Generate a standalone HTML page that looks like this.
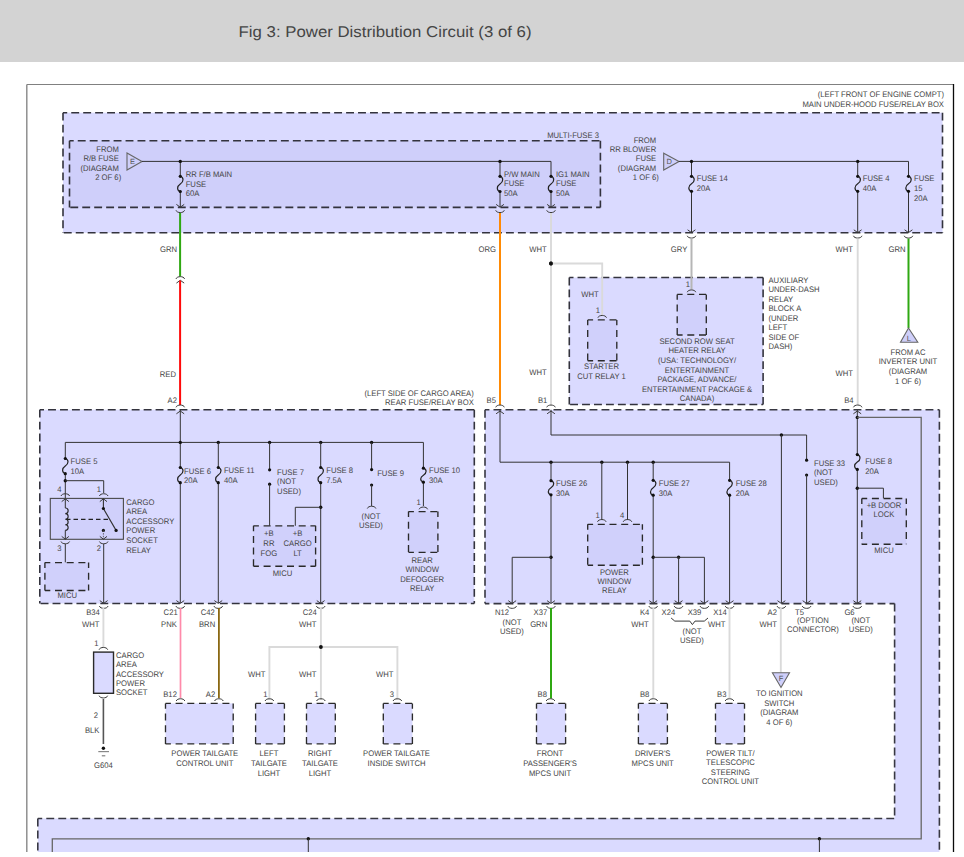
<!DOCTYPE html><html><head><meta charset="utf-8"><style>html,body{margin:0;padding:0;background:#fff;overflow:hidden}svg{display:block}text{font-family:"Liberation Sans",sans-serif;text-rendering:geometricPrecision}</style></head><body><svg width="964" height="857" viewBox="0 0 964 857" font-family="Liberation Sans, sans-serif">
<rect x="0" y="0" width="964" height="857" fill="#fff"/>
<rect x="0" y="0" width="964" height="62" fill="#d3d3d3"/>
<text x="238.6" y="36.9" font-size="15.6" fill="#454545" textLength="292.9" lengthAdjust="spacingAndGlyphs">Fig 3: Power Distribution Circuit (3 of 6)</text>
<path d="M26.8,84.5 V852" stroke="#888" stroke-width="1.4" fill="none"/>
<path d="M26.8,84.5 H953.5" stroke="#808080" stroke-width="1.2" fill="none"/>
<path d="M953.5,84 V852" stroke="#0a0a0a" stroke-width="1.3" fill="none"/>
<rect x="63" y="112.7" width="879.5" height="120.10000000000001" fill="#dadaff"/>
<path d="M63,112.7 H942.5" stroke="#33333d" stroke-width="1.6" stroke-dasharray="7.9 4.05" fill="none" stroke-dashoffset="3.7"/>
<path d="M63,232.8 H942.5" stroke="#33333d" stroke-width="1.6" stroke-dasharray="7.9 4.05" fill="none" stroke-dashoffset="-0.8"/>
<path d="M63,112.7 V232.8 M942.5,112.7 V232.8" stroke="#33333d" stroke-width="1.6" stroke-dasharray="7.9 4.05" fill="none" stroke-dashoffset="0"/>
<text transform="scale(0.947 1)" x="996.83" y="97" text-anchor="end" font-size="8.1" fill="#454545">(LEFT FRONT OF ENGINE COMPT)</text>
<text transform="scale(0.947 1)" x="996.83" y="106.5" text-anchor="end" font-size="8.1" fill="#454545">MAIN UNDER-HOOD FUSE/RELAY BOX</text>
<rect x="69.5" y="140.7" width="530.9" height="66.70000000000002" fill="#cfcffa"/>
<path d="M69.5,140.7 H600.4" stroke="#33333d" stroke-width="1.6" stroke-dasharray="7.9 4.05" fill="none" stroke-dashoffset="3.7"/>
<path d="M69.5,207.4 H600.4" stroke="#33333d" stroke-width="1.6" stroke-dasharray="7.9 4.05" fill="none" stroke-dashoffset="-0.8"/>
<path d="M69.5,140.7 V207.4 M600.4,140.7 V207.4" stroke="#33333d" stroke-width="1.6" stroke-dasharray="7.9 4.05" fill="none" stroke-dashoffset="0"/>
<text transform="scale(0.947 1)" x="632.52" y="137.7" text-anchor="end" font-size="8.1" fill="#454545">MULTI-FUSE 3</text>
<text transform="scale(0.947 1)" x="125.45" y="152" text-anchor="end" font-size="8.1" fill="#454545">FROM</text>
<text transform="scale(0.947 1)" x="125.45" y="161.2" text-anchor="end" font-size="8.1" fill="#454545">R/B FUSE</text>
<text transform="scale(0.947 1)" x="125.45" y="170.7" text-anchor="end" font-size="8.1" fill="#454545">(DIAGRAM</text>
<text transform="scale(0.947 1)" x="127.98" y="180" text-anchor="end" font-size="8.1" fill="#454545">2 OF 6)</text>
<path d="M127,153 L127,170 L142,161.4 Z" stroke="#666" stroke-width="1.1" fill="#cfcffa" />
<text x="132.6" y="164.4" text-anchor="middle" font-size="7.5" fill="#555">E</text>
<path d="M142,161.4 L551,161.4 L551,207" stroke="#333" stroke-width="1.0" fill="none" />
<path d="M180.3,161.4 L180.3,207" stroke="#333" stroke-width="1.0" fill="none" />
<path d="M500,161.4 L500,207" stroke="#333" stroke-width="1.0" fill="none" />
<circle cx="180.3" cy="161.4" r="1.7" fill="#111"/>
<circle cx="500" cy="161.4" r="1.7" fill="#111"/>
<rect x="179.10000000000002" y="176.3" width="2.4" height="15.199999999999989" fill="#cfcffa"/>
<path d="M180.3,176.3 C183.9,177.44 183.9,181.62 180.3,183.9 C176.70000000000002,186.18 176.70000000000002,190.36 180.3,191.5" stroke="#222" stroke-width="1.2" fill="none" />
<circle cx="180.3" cy="176.3" r="1.6" fill="#111"/>
<circle cx="180.3" cy="191.5" r="1.6" fill="#111"/>
<path d="M176.4,204.39999999999998 L180.3,207.2 L184.20000000000002,204.39999999999998" stroke="#3a3a3a" stroke-width="1.0" fill="none" />
<path d="M176.0,210.3 C176.9,213.3 183.70000000000002,213.3 184.60000000000002,210.3" stroke="#3a3a3a" stroke-width="1.0" fill="none" />
<rect x="498.8" y="176.3" width="2.4" height="15.199999999999989" fill="#cfcffa"/>
<path d="M500,176.3 C503.6,177.44 503.6,181.62 500,183.9 C496.4,186.18 496.4,190.36 500,191.5" stroke="#222" stroke-width="1.2" fill="none" />
<circle cx="500" cy="176.3" r="1.6" fill="#111"/>
<circle cx="500" cy="191.5" r="1.6" fill="#111"/>
<path d="M496.1,204.39999999999998 L500,207.2 L503.9,204.39999999999998" stroke="#3a3a3a" stroke-width="1.0" fill="none" />
<path d="M495.7,210.3 C496.59999999999997,213.3 503.40000000000003,213.3 504.3,210.3" stroke="#3a3a3a" stroke-width="1.0" fill="none" />
<rect x="549.8" y="176.3" width="2.4" height="15.199999999999989" fill="#cfcffa"/>
<path d="M551,176.3 C554.6,177.44 554.6,181.62 551,183.9 C547.4,186.18 547.4,190.36 551,191.5" stroke="#222" stroke-width="1.2" fill="none" />
<circle cx="551" cy="176.3" r="1.6" fill="#111"/>
<circle cx="551" cy="191.5" r="1.6" fill="#111"/>
<path d="M547.1,204.39999999999998 L551,207.2 L554.9,204.39999999999998" stroke="#3a3a3a" stroke-width="1.0" fill="none" />
<path d="M546.7,210.3 C547.6,213.3 554.4,213.3 555.3,210.3" stroke="#3a3a3a" stroke-width="1.0" fill="none" />
<text transform="scale(0.947 1)" x="196.09" y="177" font-size="8.1" fill="#454545">RR F/B MAIN</text>
<text transform="scale(0.947 1)" x="196.09" y="186.5" font-size="8.1" fill="#454545">FUSE</text>
<text transform="scale(0.947 1)" x="196.09" y="196" font-size="8.1" fill="#454545">60A</text>
<text transform="scale(0.947 1)" x="532.21" y="177" font-size="8.1" fill="#454545">P/W MAIN</text>
<text transform="scale(0.947 1)" x="532.21" y="186.3" font-size="8.1" fill="#454545">FUSE</text>
<text transform="scale(0.947 1)" x="532.21" y="195.8" font-size="8.1" fill="#454545">50A</text>
<text transform="scale(0.947 1)" x="587.12" y="177" font-size="8.1" fill="#454545">IG1 MAIN</text>
<text transform="scale(0.947 1)" x="587.12" y="186.3" font-size="8.1" fill="#454545">FUSE</text>
<text transform="scale(0.947 1)" x="587.12" y="195.8" font-size="8.1" fill="#454545">50A</text>
<text transform="scale(0.947 1)" x="692.93" y="143.1" text-anchor="end" font-size="8.1" fill="#454545">FROM</text>
<text transform="scale(0.947 1)" x="692.93" y="151.8" text-anchor="end" font-size="8.1" fill="#454545">RR BLOWER</text>
<text transform="scale(0.947 1)" x="692.93" y="161.1" text-anchor="end" font-size="8.1" fill="#454545">FUSE</text>
<text transform="scale(0.947 1)" x="692.93" y="170.6" text-anchor="end" font-size="8.1" fill="#454545">(DIAGRAM</text>
<text transform="scale(0.947 1)" x="695.67" y="180" text-anchor="end" font-size="8.1" fill="#454545">1 OF 6)</text>
<path d="M663.7,153.2 L663.7,170 L679,161.4 Z" stroke="#666" stroke-width="1.1" fill="#cfcffa" />
<text x="669.2" y="164.4" text-anchor="middle" font-size="7.5" fill="#555">D</text>
<path d="M678.8,161.4 L908.5,161.4 L908.5,232.6" stroke="#333" stroke-width="1.0" fill="none" />
<path d="M691.5,161.4 L691.5,232.6" stroke="#333" stroke-width="1.0" fill="none" />
<path d="M857.7,161.4 L857.7,232.6" stroke="#333" stroke-width="1.0" fill="none" />
<circle cx="691.5" cy="161.4" r="1.7" fill="#111"/>
<circle cx="857.7" cy="161.4" r="1.7" fill="#111"/>
<rect x="690.3" y="176.3" width="2.4" height="15.0" fill="#dadaff"/>
<path d="M691.5,176.3 C695.1,177.425 695.1,181.55 691.5,183.8 C687.9,186.05 687.9,190.175 691.5,191.3" stroke="#222" stroke-width="1.2" fill="none" />
<circle cx="691.5" cy="176.3" r="1.6" fill="#111"/>
<circle cx="691.5" cy="191.3" r="1.6" fill="#111"/>
<path d="M687.6,229.79999999999998 L691.5,232.6 L695.4,229.79999999999998" stroke="#3a3a3a" stroke-width="1.0" fill="none" />
<path d="M687.2,235.8 C688.1,238.8 694.9,238.8 695.8,235.8" stroke="#3a3a3a" stroke-width="1.0" fill="none" />
<rect x="856.5" y="176.3" width="2.4" height="15.0" fill="#dadaff"/>
<path d="M857.7,176.3 C861.3000000000001,177.425 861.3000000000001,181.55 857.7,183.8 C854.1,186.05 854.1,190.175 857.7,191.3" stroke="#222" stroke-width="1.2" fill="none" />
<circle cx="857.7" cy="176.3" r="1.6" fill="#111"/>
<circle cx="857.7" cy="191.3" r="1.6" fill="#111"/>
<path d="M853.8000000000001,229.79999999999998 L857.7,232.6 L861.6,229.79999999999998" stroke="#3a3a3a" stroke-width="1.0" fill="none" />
<path d="M853.4000000000001,235.8 C854.3000000000001,238.8 861.1,238.8 862.0,235.8" stroke="#3a3a3a" stroke-width="1.0" fill="none" />
<rect x="907.3" y="176.3" width="2.4" height="15.0" fill="#dadaff"/>
<path d="M908.5,176.3 C912.1,177.425 912.1,181.55 908.5,183.8 C904.9,186.05 904.9,190.175 908.5,191.3" stroke="#222" stroke-width="1.2" fill="none" />
<circle cx="908.5" cy="176.3" r="1.6" fill="#111"/>
<circle cx="908.5" cy="191.3" r="1.6" fill="#111"/>
<path d="M904.6,229.79999999999998 L908.5,232.6 L912.4,229.79999999999998" stroke="#3a3a3a" stroke-width="1.0" fill="none" />
<path d="M904.2,235.8 C905.1,238.8 911.9,238.8 912.8,235.8" stroke="#3a3a3a" stroke-width="1.0" fill="none" />
<text transform="scale(0.947 1)" x="735.69" y="180.7" font-size="8.1" fill="#454545">FUSE 14</text>
<text transform="scale(0.947 1)" x="735.69" y="190.9" font-size="8.1" fill="#454545">20A</text>
<text transform="scale(0.947 1)" x="911.09" y="180.8" font-size="8.1" fill="#454545">FUSE 4</text>
<text transform="scale(0.947 1)" x="911.09" y="190.7" font-size="8.1" fill="#454545">40A</text>
<text transform="scale(0.947 1)" x="965.15" y="180.8" font-size="8.1" fill="#454545">FUSE</text>
<text transform="scale(0.947 1)" x="965.15" y="190.7" font-size="8.1" fill="#454545">15</text>
<text transform="scale(0.947 1)" x="965.15" y="200.6" font-size="8.1" fill="#454545">20A</text>
<path d="M180.1,213 L180.1,276.4" stroke="#2fa812" stroke-width="2" fill="none" />
<path d="M176.0,278.9 C176.9,275.9 183.70000000000002,275.9 184.60000000000002,278.9" stroke="#3a3a3a" stroke-width="1.0" fill="none" />
<path d="M176.4,283.1 L180.3,280.3 L184.20000000000002,283.1" stroke="#3a3a3a" stroke-width="1.0" fill="none" />
<path d="M180.1,280.5 L180.1,405" stroke="#ff0a0a" stroke-width="2" fill="none" />
<text transform="scale(0.947 1)" x="186.91" y="251.5" text-anchor="end" font-size="8.1" fill="#454545">GRN</text>
<text transform="scale(0.947 1)" x="185.85" y="376.8" text-anchor="end" font-size="8.1" fill="#454545">RED</text>
<text transform="scale(0.947 1)" x="186.91" y="403" text-anchor="end" font-size="8.1" fill="#454545">A2</text>
<path d="M500,213 L500,405" stroke="#ff8a05" stroke-width="2" fill="none" />
<text transform="scale(0.947 1)" x="523.76" y="251.6" text-anchor="end" font-size="8.1" fill="#454545">ORG</text>
<text transform="scale(0.947 1)" x="523.76" y="403" text-anchor="end" font-size="8.1" fill="#454545">B5</text>
<path d="M551,213 L551,405" stroke="#dadada" stroke-width="1.9" fill="none" />
<circle cx="551" cy="263.5" r="1.9" fill="#111"/>
<text transform="scale(0.947 1)" x="577.3" y="251.6" text-anchor="end" font-size="8.1" fill="#454545">WHT</text>
<text transform="scale(0.947 1)" x="577.3" y="375.4" text-anchor="end" font-size="8.1" fill="#454545">WHT</text>
<text transform="scale(0.947 1)" x="577.93" y="403" text-anchor="end" font-size="8.1" fill="#454545">B1</text>
<rect x="569.3" y="277.5" width="193.80000000000007" height="127.0" fill="#dadaff"/>
<path d="M569.3,277.5 H763.1" stroke="#33333d" stroke-width="1.6" stroke-dasharray="7.9 4.05" fill="none" stroke-dashoffset="3.7"/>
<path d="M569.3,404.5 H763.1" stroke="#33333d" stroke-width="1.6" stroke-dasharray="7.9 4.05" fill="none" stroke-dashoffset="-0.8"/>
<path d="M569.3,277.5 V404.5 M763.1,277.5 V404.5" stroke="#33333d" stroke-width="1.6" stroke-dasharray="7.9 4.05" fill="none" stroke-dashoffset="0"/>
<path d="M551,263.5 L602.2,263.5 L602.2,315" stroke="#dadada" stroke-width="1.9" fill="none" />
<circle cx="551" cy="263.5" r="1.9" fill="#111"/>
<path d="M691.5,238.5 L691.5,289.5" stroke="#b6b6b6" stroke-width="2" fill="none" />
<text transform="scale(0.947 1)" x="613.73" y="296.5" font-size="8.1" fill="#454545">WHT</text>
<text transform="scale(0.947 1)" x="633.58" y="312.7" text-anchor="end" font-size="8.1" fill="#454545">1</text>
<path d="M597.9000000000001,317.7 C598.8000000000001,314.7 605.6,314.7 606.5,317.7" stroke="#3a3a3a" stroke-width="1.0" fill="none" />
<rect x="587.7" y="319.9" width="29.09999999999991" height="40.80000000000001" fill="#d0d0fb"/>
<path d="M587.7,319.9 H616.8" stroke="#2a2a2a" stroke-width="1.35" stroke-dasharray="7 4.7" fill="none" stroke-dashoffset="1.6"/>
<path d="M587.7,360.7 H616.8" stroke="#2a2a2a" stroke-width="1.35" stroke-dasharray="7 4.7" fill="none" stroke-dashoffset="1.6"/>
<path d="M587.7,319.9 V360.7 M616.8,319.9 V360.7" stroke="#2a2a2a" stroke-width="1.35" stroke-dasharray="7 4.7" fill="none" stroke-dashoffset="1.6"/>
<text transform="scale(0.947 1)" x="635.16" y="368.9" text-anchor="middle" font-size="8.1" fill="#454545">STARTER</text>
<text transform="scale(0.947 1)" x="635.16" y="378.6" text-anchor="middle" font-size="8.1" fill="#454545">CUT RELAY 1</text>
<text transform="scale(0.947 1)" x="725.77" y="251.5" text-anchor="end" font-size="8.1" fill="#454545">GRY</text>
<text transform="scale(0.947 1)" x="728.62" y="286.8" text-anchor="end" font-size="8.1" fill="#454545">1</text>
<path d="M687.2,292.2 C688.1,289.2 694.9,289.2 695.8,292.2" stroke="#3a3a3a" stroke-width="1.0" fill="none" />
<rect x="677.2" y="294.4" width="29.09999999999991" height="40.60000000000002" fill="#d0d0fb"/>
<path d="M677.2,294.4 H706.3" stroke="#2a2a2a" stroke-width="1.35" stroke-dasharray="7 4.7" fill="none" stroke-dashoffset="1.6"/>
<path d="M677.2,335 H706.3" stroke="#2a2a2a" stroke-width="1.35" stroke-dasharray="7 4.7" fill="none" stroke-dashoffset="1.6"/>
<path d="M677.2,294.4 V335 M706.3,294.4 V335" stroke="#2a2a2a" stroke-width="1.35" stroke-dasharray="7 4.7" fill="none" stroke-dashoffset="1.6"/>
<text transform="scale(0.947 1)" x="736.01" y="343.9" text-anchor="middle" font-size="8.1" fill="#454545">SECOND ROW SEAT</text>
<text transform="scale(0.947 1)" x="736.01" y="353.45" text-anchor="middle" font-size="8.1" fill="#454545">HEATER RELAY</text>
<text transform="scale(0.947 1)" x="736.01" y="363.0" text-anchor="middle" font-size="8.1" fill="#454545">(USA: TECHNOLOGY/</text>
<text transform="scale(0.947 1)" x="736.01" y="372.55" text-anchor="middle" font-size="8.1" fill="#454545">ENTERTAINMENT</text>
<text transform="scale(0.947 1)" x="736.01" y="382.1" text-anchor="middle" font-size="8.1" fill="#454545">PACKAGE, ADVANCE/</text>
<text transform="scale(0.947 1)" x="736.01" y="391.65" text-anchor="middle" font-size="8.1" fill="#454545">ENTERTAINMENT PACKAGE &amp;</text>
<text transform="scale(0.947 1)" x="736.01" y="401.2" text-anchor="middle" font-size="8.1" fill="#454545">CANADA)</text>
<text transform="scale(0.947 1)" x="811.51" y="282.6" font-size="8.1" fill="#454545">AUXILIARY</text>
<text transform="scale(0.947 1)" x="811.51" y="292.15" font-size="8.1" fill="#454545">UNDER-DASH</text>
<text transform="scale(0.947 1)" x="811.51" y="301.7" font-size="8.1" fill="#454545">RELAY</text>
<text transform="scale(0.947 1)" x="811.51" y="311.25" font-size="8.1" fill="#454545">BLOCK A</text>
<text transform="scale(0.947 1)" x="811.51" y="320.8" font-size="8.1" fill="#454545">(UNDER</text>
<text transform="scale(0.947 1)" x="811.51" y="330.35" font-size="8.1" fill="#454545">LEFT</text>
<text transform="scale(0.947 1)" x="811.51" y="339.9" font-size="8.1" fill="#454545">SIDE OF</text>
<text transform="scale(0.947 1)" x="811.51" y="349.45" font-size="8.1" fill="#454545">DASH)</text>
<path d="M857.7,238.5 L857.7,405" stroke="#dadada" stroke-width="1.9" fill="none" />
<text transform="scale(0.947 1)" x="900.74" y="251.5" text-anchor="end" font-size="8.1" fill="#454545">WHT</text>
<text transform="scale(0.947 1)" x="900.74" y="375.5" text-anchor="end" font-size="8.1" fill="#454545">WHT</text>
<text transform="scale(0.947 1)" x="901.37" y="403" text-anchor="end" font-size="8.1" fill="#454545">B4</text>
<path d="M908.5,238.5 L908.5,328" stroke="#2fa812" stroke-width="2" fill="none" />
<text transform="scale(0.947 1)" x="956.18" y="251.5" text-anchor="end" font-size="8.1" fill="#454545">GRN</text>
<path d="M908.5,328 L900.5,342.3 L917.8,342.3 Z" stroke="#666" stroke-width="1.1" fill="#cfcffa" />
<text x="908.8" y="340.5" text-anchor="middle" font-size="7.5" fill="#555">L</text>
<text transform="scale(0.947 1)" x="958.82" y="354.9" text-anchor="middle" font-size="8.1" fill="#454545">FROM AC</text>
<text transform="scale(0.947 1)" x="958.82" y="364.45" text-anchor="middle" font-size="8.1" fill="#454545">INVERTER UNIT</text>
<text transform="scale(0.947 1)" x="958.82" y="374.0" text-anchor="middle" font-size="8.1" fill="#454545">(DIAGRAM</text>
<text transform="scale(0.947 1)" x="958.82" y="383.55" text-anchor="middle" font-size="8.1" fill="#454545">1 OF 6)</text>
<path d="M176.0,407.3 C176.9,404.3 183.70000000000002,404.3 184.60000000000002,407.3" stroke="#3a3a3a" stroke-width="1.0" fill="none" />
<path d="M495.7,407.3 C496.59999999999997,404.3 503.40000000000003,404.3 504.3,407.3" stroke="#3a3a3a" stroke-width="1.0" fill="none" />
<path d="M546.7,407.3 C547.6,404.3 554.4,404.3 555.3,407.3" stroke="#3a3a3a" stroke-width="1.0" fill="none" />
<path d="M853.4000000000001,407.3 C854.3000000000001,404.3 861.1,404.3 862.0,407.3" stroke="#3a3a3a" stroke-width="1.0" fill="none" />
<rect x="39.8" y="409.7" width="434.5" height="193.8" fill="#dadaff"/>
<path d="M39.8,409.7 H474.3" stroke="#33333d" stroke-width="1.6" stroke-dasharray="7.9 4.05" fill="none" stroke-dashoffset="3.7"/>
<path d="M39.8,603.5 H474.3" stroke="#33333d" stroke-width="1.6" stroke-dasharray="7.9 4.05" fill="none" stroke-dashoffset="-0.8"/>
<path d="M39.8,409.7 V603.5 M474.3,409.7 V603.5" stroke="#33333d" stroke-width="1.6" stroke-dasharray="7.9 4.05" fill="none" stroke-dashoffset="0"/>
<text transform="scale(0.947 1)" x="500.32" y="396.2" text-anchor="end" font-size="8.1" fill="#454545">(LEFT SIDE OF CARGO AREA)</text>
<text transform="scale(0.947 1)" x="500.32" y="404.6" text-anchor="end" font-size="8.1" fill="#454545">REAR FUSE/RELAY BOX</text>
<path d="M180.3,409.8 L180.3,603" stroke="#333" stroke-width="1.0" fill="none" />
<path d="M176.4,413.8 L180.3,411 L184.20000000000002,413.8" stroke="#3a3a3a" stroke-width="1.0" fill="none" />
<path d="M65.3,498 L65.3,442.4 L423.4,442.4 L423.4,506" stroke="#333" stroke-width="1.0" fill="none" />
<circle cx="180.3" cy="442.4" r="1.7" fill="#111"/>
<circle cx="218.3" cy="442.4" r="1.7" fill="#111"/>
<circle cx="269.6" cy="442.4" r="1.7" fill="#111"/>
<circle cx="320.7" cy="442.4" r="1.7" fill="#111"/>
<circle cx="371.6" cy="442.4" r="1.7" fill="#111"/>
<rect x="64.1" y="458.5" width="2.4" height="15.199999999999989" fill="#dadaff"/>
<path d="M65.3,458.5 C68.89999999999999,459.64 68.89999999999999,463.82000000000005 65.3,466.1 C61.699999999999996,468.38 61.699999999999996,472.56 65.3,473.7" stroke="#222" stroke-width="1.2" fill="none" />
<circle cx="65.3" cy="458.5" r="1.6" fill="#111"/>
<circle cx="65.3" cy="473.7" r="1.6" fill="#111"/>
<text transform="scale(0.947 1)" x="74.55" y="463.7" font-size="8.1" fill="#454545">FUSE 5</text>
<text transform="scale(0.947 1)" x="74.55" y="474" font-size="8.1" fill="#454545">10A</text>
<circle cx="65.3" cy="480.7" r="1.7" fill="#111"/>
<path d="M65.3,480.7 L103.7,480.7 L103.7,493" stroke="#333" stroke-width="1.0" fill="none" />
<path d="M61.0,496.0 C61.9,493.0 68.69999999999999,493.0 69.6,496.0" stroke="#3a3a3a" stroke-width="1.0" fill="none" />
<path d="M99.4,496.0 C100.30000000000001,493.0 107.1,493.0 108.0,496.0" stroke="#3a3a3a" stroke-width="1.0" fill="none" />
<text transform="scale(0.947 1)" x="62.83" y="492" text-anchor="middle" font-size="8.1" fill="#454545">4</text>
<text transform="scale(0.947 1)" x="104.33" y="492" text-anchor="middle" font-size="8.1" fill="#454545">1</text>
<rect x="50.3" y="498.4" width="73.10000000000001" height="40.89999999999998" fill="#d0d0fb" stroke="#4a4a4a" stroke-width="1.1"/>
<path d="M61.699999999999996,501.6 L65.3,498.8 L68.89999999999999,501.6" stroke="#3a3a3a" stroke-width="1.0" fill="none" />
<path d="M65.3,498.8 L65.3,508" stroke="#333" stroke-width="1.0" fill="none" />
<path d="M65.3,508 c3.8,0 3.8,5.6 0,5.6 c3.8,0 3.8,5.6 0,5.6 c3.8,0 3.8,5.6 0,5.6 c3.8,0 3.8,5.6 0,5.6" stroke="#222" stroke-width="1.1" fill="none" />
<path d="M65.3,530.4 L65.3,539.2" stroke="#333" stroke-width="1.0" fill="none" />
<path d="M61.699999999999996,536.4000000000001 L65.3,539.2 L68.89999999999999,536.4000000000001" stroke="#3a3a3a" stroke-width="1.0" fill="none" />
<path d="M66,519.4 L109.4,519.4" stroke="#222" stroke-width="1.1" fill="none" stroke-dasharray="4.5 3"/>
<path d="M99.80000000000001,501.6 L103.4,498.8 L107.0,501.6" stroke="#3a3a3a" stroke-width="1.0" fill="none" />
<path d="M103.4,498.8 L103.4,508.5 L116.1,530.4" stroke="#333" stroke-width="1.1" fill="none" />
<circle cx="103.4" cy="508.5" r="1.6" fill="#111"/>
<circle cx="116.1" cy="530.4" r="1.6" fill="#111"/>
<circle cx="103.4" cy="530.4" r="1.6" fill="#111"/>
<path d="M103.4,530.4 L103.4,539" stroke="#555" stroke-width="0.9" fill="none" stroke-dasharray="1.5 1.2"/>
<path d="M99.80000000000001,536.4000000000001 L103.4,539.2 L107.0,536.4000000000001" stroke="#3a3a3a" stroke-width="1.0" fill="none" />
<path d="M61.0,541.5 C61.9,544.5 68.69999999999999,544.5 69.6,541.5" stroke="#3a3a3a" stroke-width="1.0" fill="none" />
<path d="M99.4,541.5 C100.30000000000001,544.5 107.1,544.5 108.0,541.5" stroke="#3a3a3a" stroke-width="1.0" fill="none" />
<text transform="scale(0.947 1)" x="62.83" y="551" text-anchor="middle" font-size="8.1" fill="#454545">3</text>
<text transform="scale(0.947 1)" x="104.33" y="551" text-anchor="middle" font-size="8.1" fill="#454545">2</text>
<path d="M65.3,544 L65.3,562.6" stroke="#333" stroke-width="1.0" fill="none" />
<path d="M103.7,544 L103.7,603" stroke="#333" stroke-width="1.0" fill="none" />
<rect x="44.9" y="562.6" width="43.699999999999996" height="27.899999999999977" fill="#d0d0fb"/>
<path d="M44.9,562.6 H88.6" stroke="#2a2a2a" stroke-width="1.35" stroke-dasharray="7 4.7" fill="none" stroke-dashoffset="1.6"/>
<path d="M44.9,590.5 H88.6" stroke="#2a2a2a" stroke-width="1.35" stroke-dasharray="7 4.7" fill="none" stroke-dashoffset="1.6"/>
<path d="M44.9,562.6 V590.5 M88.6,562.6 V590.5" stroke="#2a2a2a" stroke-width="1.35" stroke-dasharray="7 4.7" fill="none" stroke-dashoffset="1.6"/>
<text transform="scale(0.947 1)" x="70.96" y="597.7" text-anchor="middle" font-size="8.1" fill="#454545">MICU</text>
<text transform="scale(0.947 1)" x="133.37" y="504.8" font-size="8.1" fill="#454545">CARGO</text>
<text transform="scale(0.947 1)" x="133.37" y="514.35" font-size="8.1" fill="#454545">AREA</text>
<text transform="scale(0.947 1)" x="133.37" y="523.9" font-size="8.1" fill="#454545">ACCESSORY</text>
<text transform="scale(0.947 1)" x="133.37" y="533.45" font-size="8.1" fill="#454545">POWER</text>
<text transform="scale(0.947 1)" x="133.37" y="543.0" font-size="8.1" fill="#454545">SOCKET</text>
<text transform="scale(0.947 1)" x="133.37" y="552.55" font-size="8.1" fill="#454545">RELAY</text>
<rect x="179.10000000000002" y="467.5" width="2.4" height="15.199999999999989" fill="#dadaff"/>
<path d="M180.3,467.5 C183.9,468.64 183.9,472.82000000000005 180.3,475.1 C176.70000000000002,477.38 176.70000000000002,481.56 180.3,482.7" stroke="#222" stroke-width="1.2" fill="none" />
<circle cx="180.3" cy="467.5" r="1.6" fill="#111"/>
<circle cx="180.3" cy="482.7" r="1.6" fill="#111"/>
<text transform="scale(0.947 1)" x="194.4" y="473.6" font-size="8.1" fill="#454545">FUSE 6</text>
<text transform="scale(0.947 1)" x="194.4" y="482.9" font-size="8.1" fill="#454545">20A</text>
<path d="M218.3,442.4 L218.3,603" stroke="#333" stroke-width="1.0" fill="none" />
<rect x="217.10000000000002" y="467.5" width="2.4" height="15.199999999999989" fill="#dadaff"/>
<path d="M218.3,467.5 C221.9,468.64 221.9,472.82000000000005 218.3,475.1 C214.70000000000002,477.38 214.70000000000002,481.56 218.3,482.7" stroke="#222" stroke-width="1.2" fill="none" />
<circle cx="218.3" cy="467.5" r="1.6" fill="#111"/>
<circle cx="218.3" cy="482.7" r="1.6" fill="#111"/>
<text transform="scale(0.947 1)" x="236.43" y="473.2" font-size="8.1" fill="#454545">FUSE 11</text>
<text transform="scale(0.947 1)" x="236.43" y="483.0" font-size="8.1" fill="#454545">40A</text>
<path d="M269.6,442.4 L269.6,469.8" stroke="#333" stroke-width="1.0" fill="none" />
<circle cx="269.6" cy="469.8" r="1.6" fill="#111"/>
<circle cx="269.6" cy="484.2" r="1.6" fill="#111"/>
<path d="M269.6,484.2 L269.6,525.8" stroke="#333" stroke-width="1.0" fill="none" />
<text transform="scale(0.947 1)" x="292.61" y="474.7" font-size="8.1" fill="#454545">FUSE 7</text>
<text transform="scale(0.947 1)" x="292.61" y="484.4" font-size="8.1" fill="#454545">(NOT</text>
<text transform="scale(0.947 1)" x="292.61" y="493.8" font-size="8.1" fill="#454545">USED)</text>
<rect x="253.5" y="525.8" width="62.10000000000002" height="40.40000000000009" fill="#d0d0fb"/>
<path d="M253.5,525.8 H315.6" stroke="#2a2a2a" stroke-width="1.35" stroke-dasharray="7 4.7" fill="none" stroke-dashoffset="1.6"/>
<path d="M253.5,566.2 H315.6" stroke="#2a2a2a" stroke-width="1.35" stroke-dasharray="7 4.7" fill="none" stroke-dashoffset="1.6"/>
<path d="M253.5,525.8 V566.2 M315.6,525.8 V566.2" stroke="#2a2a2a" stroke-width="1.35" stroke-dasharray="7 4.7" fill="none" stroke-dashoffset="1.6"/>
<text transform="scale(0.947 1)" x="283.95" y="535.6" text-anchor="middle" font-size="8.1" fill="#454545">+B</text>
<text transform="scale(0.947 1)" x="283.95" y="545.8" text-anchor="middle" font-size="8.1" fill="#454545">RR</text>
<text transform="scale(0.947 1)" x="283.95" y="555.8" text-anchor="middle" font-size="8.1" fill="#454545">FOG</text>
<text transform="scale(0.947 1)" x="314.26" y="535.6" text-anchor="middle" font-size="8.1" fill="#454545">+B</text>
<text transform="scale(0.947 1)" x="314.26" y="545.8" text-anchor="middle" font-size="8.1" fill="#454545">CARGO</text>
<text transform="scale(0.947 1)" x="314.26" y="555.8" text-anchor="middle" font-size="8.1" fill="#454545">LT</text>
<text transform="scale(0.947 1)" x="298.31" y="575.9" text-anchor="middle" font-size="8.1" fill="#454545">MICU</text>
<path d="M320.7,442.4 L320.7,603" stroke="#333" stroke-width="1.0" fill="none" />
<rect x="319.5" y="467.5" width="2.4" height="15.199999999999989" fill="#dadaff"/>
<path d="M320.7,467.5 C324.3,468.64 324.3,472.82000000000005 320.7,475.1 C317.09999999999997,477.38 317.09999999999997,481.56 320.7,482.7" stroke="#222" stroke-width="1.2" fill="none" />
<circle cx="320.7" cy="467.5" r="1.6" fill="#111"/>
<circle cx="320.7" cy="482.7" r="1.6" fill="#111"/>
<circle cx="320.7" cy="507.3" r="1.7" fill="#111"/>
<path d="M320.7,507.3 L295.3,507.3 L295.3,525.8" stroke="#333" stroke-width="1.0" fill="none" />
<text transform="scale(0.947 1)" x="344.46" y="473.4" font-size="8.1" fill="#454545">FUSE 8</text>
<text transform="scale(0.947 1)" x="344.46" y="482.9" font-size="8.1" fill="#454545">7.5A</text>
<path d="M371.6,442.4 L371.6,469.6" stroke="#333" stroke-width="1.0" fill="none" />
<circle cx="371.6" cy="469.6" r="1.6" fill="#111"/>
<circle cx="371.6" cy="485" r="1.6" fill="#111"/>
<path d="M371.6,485 L371.6,506" stroke="#333" stroke-width="1.0" fill="none" />
<path d="M367.3,508.5 C368.2,505.5 375.00000000000006,505.5 375.90000000000003,508.5" stroke="#3a3a3a" stroke-width="1.0" fill="none" />
<text transform="scale(0.947 1)" x="398.31" y="476.1" font-size="8.1" fill="#454545">FUSE 9</text>
<text transform="scale(0.947 1)" x="391.76" y="518.6" text-anchor="middle" font-size="8.1" fill="#454545">(NOT</text>
<text transform="scale(0.947 1)" x="391.76" y="527.6" text-anchor="middle" font-size="8.1" fill="#454545">USED)</text>
<rect x="422.2" y="468.2" width="2.4" height="14.0" fill="#dadaff"/>
<path d="M423.4,468.2 C427.0,469.25 427.0,473.09999999999997 423.4,475.2 C419.79999999999995,477.3 419.79999999999995,481.15 423.4,482.2" stroke="#222" stroke-width="1.2" fill="none" />
<circle cx="423.4" cy="468.2" r="1.6" fill="#111"/>
<circle cx="423.4" cy="482.2" r="1.6" fill="#111"/>
<text transform="scale(0.947 1)" x="453.01" y="473.4" font-size="8.1" fill="#454545">FUSE 10</text>
<text transform="scale(0.947 1)" x="453.01" y="482.9" font-size="8.1" fill="#454545">30A</text>
<path d="M419.09999999999997,509.3 C419.99999999999994,506.3 426.8,506.3 427.7,509.3" stroke="#3a3a3a" stroke-width="1.0" fill="none" />
<text transform="scale(0.947 1)" x="442.03" y="504.6" text-anchor="middle" font-size="8.1" fill="#454545">1</text>
<rect x="408.5" y="511.6" width="29.399999999999977" height="40.799999999999955" fill="#d0d0fb"/>
<path d="M408.5,511.6 H437.9" stroke="#2a2a2a" stroke-width="1.35" stroke-dasharray="7 4.7" fill="none" stroke-dashoffset="1.6"/>
<path d="M408.5,552.4 H437.9" stroke="#2a2a2a" stroke-width="1.35" stroke-dasharray="7 4.7" fill="none" stroke-dashoffset="1.6"/>
<path d="M408.5,511.6 V552.4 M437.9,511.6 V552.4" stroke="#2a2a2a" stroke-width="1.35" stroke-dasharray="7 4.7" fill="none" stroke-dashoffset="1.6"/>
<text transform="scale(0.947 1)" x="445.83" y="563" text-anchor="middle" font-size="8.1" fill="#454545">REAR</text>
<text transform="scale(0.947 1)" x="445.83" y="572.2" text-anchor="middle" font-size="8.1" fill="#454545">WINDOW</text>
<text transform="scale(0.947 1)" x="445.83" y="581.7" text-anchor="middle" font-size="8.1" fill="#454545">DEFOGGER</text>
<text transform="scale(0.947 1)" x="445.83" y="590.9" text-anchor="middle" font-size="8.1" fill="#454545">RELAY</text>
<path d="M99.8,600.6 L103.7,603.4 L107.60000000000001,600.6" stroke="#3a3a3a" stroke-width="1.0" fill="none" />
<path d="M99.4,606.1 C100.30000000000001,609.1 107.1,609.1 108.0,606.1" stroke="#3a3a3a" stroke-width="1.0" fill="none" />
<path d="M176.4,600.6 L180.3,603.4 L184.20000000000002,600.6" stroke="#3a3a3a" stroke-width="1.0" fill="none" />
<path d="M176.0,606.1 C176.9,609.1 183.70000000000002,609.1 184.60000000000002,606.1" stroke="#3a3a3a" stroke-width="1.0" fill="none" />
<path d="M214.4,600.6 L218.3,603.4 L222.20000000000002,600.6" stroke="#3a3a3a" stroke-width="1.0" fill="none" />
<path d="M214.0,606.1 C214.9,609.1 221.70000000000002,609.1 222.60000000000002,606.1" stroke="#3a3a3a" stroke-width="1.0" fill="none" />
<path d="M316.8,600.6 L320.7,603.4 L324.59999999999997,600.6" stroke="#3a3a3a" stroke-width="1.0" fill="none" />
<path d="M316.4,606.1 C317.29999999999995,609.1 324.1,609.1 325.0,606.1" stroke="#3a3a3a" stroke-width="1.0" fill="none" />
<text transform="scale(0.947 1)" x="105.39" y="615.2" text-anchor="end" font-size="8.1" fill="#454545">B34</text>
<text transform="scale(0.947 1)" x="187.65" y="615.2" text-anchor="end" font-size="8.1" fill="#454545">C21</text>
<text transform="scale(0.947 1)" x="226.93" y="615.2" text-anchor="end" font-size="8.1" fill="#454545">C42</text>
<text transform="scale(0.947 1)" x="334.64" y="615.2" text-anchor="end" font-size="8.1" fill="#454545">C24</text>
<path d="M485,409.8 L939.4,409.8 L939.4,880 L37.8,880 L37.8,818.5 L894.6,818.5 L894.6,603.6 L485,603.6 Z" fill="#dadaff"/>
<path d="M485,409.8 H939.4 M37.8,818.5 H894.6 M485,603.6 H894.6" stroke="#383842" stroke-width="1.6" stroke-dasharray="7.9 4.1" stroke-dashoffset="3.5" fill="none"/>
<path d="M939.4,409.8 V880 M37.8,818.5 V880 M894.6,603.6 V818.5 M485,409.8 V603.6" stroke="#383842" stroke-width="1.6" stroke-dasharray="7.9 4.1" fill="none"/>
<path d="M496.1,413.8 L500,411 L503.9,413.8" stroke="#3a3a3a" stroke-width="1.0" fill="none" />
<path d="M547.1,413.8 L551,411 L554.9,413.8" stroke="#3a3a3a" stroke-width="1.0" fill="none" />
<path d="M853.4,413.8 L857.3,411 L861.1999999999999,413.8" stroke="#3a3a3a" stroke-width="1.0" fill="none" />
<path d="M500,409.8 L500,462.2 L729.6,462.2 L729.6,603" stroke="#333" stroke-width="1.0" fill="none" />
<path d="M551,409.8 L551,435 L806.6,435 L806.6,460.2" stroke="#333" stroke-width="1.0" fill="none" />
<circle cx="806.6" cy="460.2" r="1.6" fill="#111"/>
<circle cx="806.6" cy="475" r="1.6" fill="#111"/>
<path d="M806.6,475 L806.6,603" stroke="#333" stroke-width="1.0" fill="none" />
<circle cx="781.4" cy="435" r="1.7" fill="#111"/>
<path d="M781.4,435 L781.4,603" stroke="#333" stroke-width="1.0" fill="none" />
<circle cx="551" cy="462.2" r="1.7" fill="#111"/>
<circle cx="601.8" cy="462.2" r="1.7" fill="#111"/>
<circle cx="627.5" cy="462.2" r="1.7" fill="#111"/>
<circle cx="653.2" cy="462.2" r="1.7" fill="#111"/>
<path d="M551,462.2 L551,603" stroke="#333" stroke-width="1.0" fill="none" />
<rect x="549.8" y="480.7" width="2.4" height="14.100000000000023" fill="#dadaff"/>
<path d="M551,480.7 C554.6,481.7575 554.6,485.635 551,487.75 C547.4,489.865 547.4,493.7425 551,494.8" stroke="#222" stroke-width="1.2" fill="none" />
<circle cx="551" cy="480.7" r="1.6" fill="#111"/>
<circle cx="551" cy="494.8" r="1.6" fill="#111"/>
<text transform="scale(0.947 1)" x="587.22" y="486.2" font-size="8.1" fill="#454545">FUSE 26</text>
<text transform="scale(0.947 1)" x="587.22" y="496.0" font-size="8.1" fill="#454545">30A</text>
<circle cx="551" cy="557.3" r="1.7" fill="#111"/>
<path d="M551,557.3 L512.2,557.3 L512.2,603" stroke="#333" stroke-width="1.0" fill="none" />
<path d="M601.8,462.2 L601.8,520" stroke="#333" stroke-width="1.0" fill="none" />
<path d="M627.5,462.2 L627.5,520" stroke="#333" stroke-width="1.0" fill="none" />
<path d="M597.5,521.8 C598.4,518.8 605.1999999999999,518.8 606.0999999999999,521.8" stroke="#3a3a3a" stroke-width="1.0" fill="none" />
<path d="M623.2,521.8 C624.1,518.8 630.9,518.8 631.8,521.8" stroke="#3a3a3a" stroke-width="1.0" fill="none" />
<text transform="scale(0.947 1)" x="631.05" y="518" text-anchor="middle" font-size="8.1" fill="#454545">1</text>
<text transform="scale(0.947 1)" x="657.02" y="518" text-anchor="middle" font-size="8.1" fill="#454545">4</text>
<rect x="587.7" y="524.3" width="54.69999999999993" height="40.90000000000009" fill="#d0d0fb"/>
<path d="M587.7,524.3 H642.4" stroke="#2a2a2a" stroke-width="1.35" stroke-dasharray="7 4.7" fill="none" stroke-dashoffset="1.6"/>
<path d="M587.7,565.2 H642.4" stroke="#2a2a2a" stroke-width="1.35" stroke-dasharray="7 4.7" fill="none" stroke-dashoffset="1.6"/>
<path d="M587.7,524.3 V565.2 M642.4,524.3 V565.2" stroke="#2a2a2a" stroke-width="1.35" stroke-dasharray="7 4.7" fill="none" stroke-dashoffset="1.6"/>
<text transform="scale(0.947 1)" x="648.79" y="574.6" text-anchor="middle" font-size="8.1" fill="#454545">POWER</text>
<text transform="scale(0.947 1)" x="648.79" y="584" text-anchor="middle" font-size="8.1" fill="#454545">WINDOW</text>
<text transform="scale(0.947 1)" x="648.79" y="593.4" text-anchor="middle" font-size="8.1" fill="#454545">RELAY</text>
<path d="M653.2,462.2 L653.2,603" stroke="#333" stroke-width="1.0" fill="none" />
<rect x="652.0" y="480.3" width="2.4" height="14.899999999999977" fill="#dadaff"/>
<path d="M653.2,480.3 C656.8000000000001,481.4175 656.8000000000001,485.515 653.2,487.75 C649.6,489.985 649.6,494.0825 653.2,495.2" stroke="#222" stroke-width="1.2" fill="none" />
<circle cx="653.2" cy="480.3" r="1.6" fill="#111"/>
<circle cx="653.2" cy="495.2" r="1.6" fill="#111"/>
<text transform="scale(0.947 1)" x="695.67" y="486.2" font-size="8.1" fill="#454545">FUSE 27</text>
<text transform="scale(0.947 1)" x="695.67" y="496.0" font-size="8.1" fill="#454545">30A</text>
<circle cx="653.2" cy="557.3" r="1.7" fill="#111"/>
<circle cx="678.6" cy="557.3" r="1.7" fill="#111"/>
<path d="M653.2,557.3 L704.4,557.3 L704.4,603" stroke="#333" stroke-width="1.0" fill="none" />
<path d="M678.6,557.3 L678.6,603" stroke="#333" stroke-width="1.0" fill="none" />
<rect x="728.4" y="480.3" width="2.4" height="14.899999999999977" fill="#dadaff"/>
<path d="M729.6,480.3 C733.2,481.4175 733.2,485.515 729.6,487.75 C726.0,489.985 726.0,494.0825 729.6,495.2" stroke="#222" stroke-width="1.2" fill="none" />
<circle cx="729.6" cy="480.3" r="1.6" fill="#111"/>
<circle cx="729.6" cy="495.2" r="1.6" fill="#111"/>
<text transform="scale(0.947 1)" x="776.87" y="486.2" font-size="8.1" fill="#454545">FUSE 28</text>
<text transform="scale(0.947 1)" x="776.87" y="496.0" font-size="8.1" fill="#454545">20A</text>
<text transform="scale(0.947 1)" x="859.56" y="465.5" font-size="8.1" fill="#454545">FUSE 33</text>
<text transform="scale(0.947 1)" x="859.56" y="475.05" font-size="8.1" fill="#454545">(NOT</text>
<text transform="scale(0.947 1)" x="859.56" y="484.6" font-size="8.1" fill="#454545">USED)</text>
<path d="M857.3,409.8 L857.3,603" stroke="#333" stroke-width="1.0" fill="none" />
<circle cx="857.3" cy="417.4" r="1.7" fill="#111"/>
<path d="M857.3,417.4 L921.2,417.4 L921.2,838.8 L52.3,838.8 L52.3,880" stroke="#666" stroke-width="1.3" fill="none" />
<circle cx="819.4" cy="838.8" r="1.7" fill="#111"/>
<path d="M819.4,838.8 L819.4,860" stroke="#333" stroke-width="1.0" fill="none" />
<circle cx="308.3" cy="838.8" r="1.7" fill="#111"/>
<path d="M308.3,838.8 L308.3,860" stroke="#333" stroke-width="1.0" fill="none" />
<rect x="856.0999999999999" y="454.6" width="2.4" height="14.799999999999955" fill="#dadaff"/>
<path d="M857.3,454.6 C860.9,455.71000000000004 860.9,459.78000000000003 857.3,462.0 C853.6999999999999,464.21999999999997 853.6999999999999,468.28999999999996 857.3,469.4" stroke="#222" stroke-width="1.2" fill="none" />
<circle cx="857.3" cy="454.6" r="1.6" fill="#111"/>
<circle cx="857.3" cy="469.4" r="1.6" fill="#111"/>
<text transform="scale(0.947 1)" x="913.62" y="463.9" font-size="8.1" fill="#454545">FUSE 8</text>
<text transform="scale(0.947 1)" x="913.62" y="474.0" font-size="8.1" fill="#454545">20A</text>
<circle cx="857.3" cy="488.2" r="1.7" fill="#111"/>
<path d="M857.3,488.2 L883.4,488.2 L883.4,498.5" stroke="#333" stroke-width="1.0" fill="none" />
<rect x="861.8" y="498.5" width="44.5" height="45.700000000000045" fill="#d0d0fb"/>
<path d="M861.8,498.5 H906.3" stroke="#2a2a2a" stroke-width="1.35" stroke-dasharray="7 4.7" fill="none" stroke-dashoffset="1.6"/>
<path d="M861.8,544.2 H906.3" stroke="#2a2a2a" stroke-width="1.35" stroke-dasharray="7 4.7" fill="none" stroke-dashoffset="1.6"/>
<path d="M861.8,498.5 V544.2 M906.3,498.5 V544.2" stroke="#2a2a2a" stroke-width="1.35" stroke-dasharray="7 4.7" fill="none" stroke-dashoffset="1.6"/>
<text transform="scale(0.947 1)" x="933.47" y="507.8" text-anchor="middle" font-size="8.1" fill="#454545">+B DOOR</text>
<text transform="scale(0.947 1)" x="933.47" y="516.6" text-anchor="middle" font-size="8.1" fill="#454545">LOCK</text>
<text transform="scale(0.947 1)" x="933.47" y="552.6" text-anchor="middle" font-size="8.1" fill="#454545">MICU</text>
<path d="M508.30000000000007,600.7 L512.2,603.5 L516.1,600.7" stroke="#3a3a3a" stroke-width="1.0" fill="none" />
<path d="M507.90000000000003,606.1 C508.8,609.1 515.6,609.1 516.5,606.1" stroke="#3a3a3a" stroke-width="1.0" fill="none" />
<path d="M547.1,600.7 L551,603.5 L554.9,600.7" stroke="#3a3a3a" stroke-width="1.0" fill="none" />
<path d="M546.7,606.1 C547.6,609.1 554.4,609.1 555.3,606.1" stroke="#3a3a3a" stroke-width="1.0" fill="none" />
<path d="M649.3000000000001,600.7 L653.2,603.5 L657.1,600.7" stroke="#3a3a3a" stroke-width="1.0" fill="none" />
<path d="M648.9000000000001,606.1 C649.8000000000001,609.1 656.6,609.1 657.5,606.1" stroke="#3a3a3a" stroke-width="1.0" fill="none" />
<path d="M674.7,600.7 L678.6,603.5 L682.5,600.7" stroke="#3a3a3a" stroke-width="1.0" fill="none" />
<path d="M674.3000000000001,606.1 C675.2,609.1 682.0,609.1 682.9,606.1" stroke="#3a3a3a" stroke-width="1.0" fill="none" />
<path d="M700.5,600.7 L704.4,603.5 L708.3,600.7" stroke="#3a3a3a" stroke-width="1.0" fill="none" />
<path d="M700.1,606.1 C701.0,609.1 707.8,609.1 708.6999999999999,606.1" stroke="#3a3a3a" stroke-width="1.0" fill="none" />
<path d="M725.7,600.7 L729.6,603.5 L733.5,600.7" stroke="#3a3a3a" stroke-width="1.0" fill="none" />
<path d="M725.3000000000001,606.1 C726.2,609.1 733.0,609.1 733.9,606.1" stroke="#3a3a3a" stroke-width="1.0" fill="none" />
<path d="M777.5,600.7 L781.4,603.5 L785.3,600.7" stroke="#3a3a3a" stroke-width="1.0" fill="none" />
<path d="M777.1,606.1 C778.0,609.1 784.8,609.1 785.6999999999999,606.1" stroke="#3a3a3a" stroke-width="1.0" fill="none" />
<path d="M802.7,600.7 L806.6,603.5 L810.5,600.7" stroke="#3a3a3a" stroke-width="1.0" fill="none" />
<path d="M802.3000000000001,606.1 C803.2,609.1 810.0,609.1 810.9,606.1" stroke="#3a3a3a" stroke-width="1.0" fill="none" />
<path d="M853.4,600.7 L857.3,603.5 L861.1999999999999,600.7" stroke="#3a3a3a" stroke-width="1.0" fill="none" />
<path d="M853.0,606.1 C853.9,609.1 860.6999999999999,609.1 861.5999999999999,606.1" stroke="#3a3a3a" stroke-width="1.0" fill="none" />
<text transform="scale(0.947 1)" x="530.1" y="615.2" text-anchor="middle" font-size="8.1" fill="#454545">N12</text>
<text transform="scale(0.947 1)" x="540.65" y="624.8" text-anchor="middle" font-size="8.1" fill="#454545">(NOT</text>
<text transform="scale(0.947 1)" x="540.65" y="633.8" text-anchor="middle" font-size="8.1" fill="#454545">USED)</text>
<text transform="scale(0.947 1)" x="577.82" y="615.2" text-anchor="end" font-size="8.1" fill="#454545">X37</text>
<text transform="scale(0.947 1)" x="577.82" y="627.1" text-anchor="end" font-size="8.1" fill="#454545">GRN</text>
<text transform="scale(0.947 1)" x="685.74" y="615.2" text-anchor="end" font-size="8.1" fill="#454545">K4</text>
<text transform="scale(0.947 1)" x="685.11" y="627.1" text-anchor="end" font-size="8.1" fill="#454545">WHT</text>
<text transform="scale(0.947 1)" x="705.81" y="614.6" text-anchor="middle" font-size="8.1" fill="#454545">X24</text>
<text transform="scale(0.947 1)" x="733.37" y="614.6" text-anchor="middle" font-size="8.1" fill="#454545">X39</text>
<text transform="scale(0.947 1)" x="760.3" y="614.6" text-anchor="middle" font-size="8.1" fill="#454545">X14</text>
<text transform="scale(0.947 1)" x="766.0" y="627.1" text-anchor="end" font-size="8.1" fill="#454545">WHT</text>
<path d="M671.1,618 L674.8,621.1 L689.8,621.1 L692.4,624.6 L695,621.1 L704.3,621.1 L708,618" stroke="#3a3a3a" stroke-width="1.0" fill="none" />
<text transform="scale(0.947 1)" x="730.73" y="634" text-anchor="middle" font-size="8.1" fill="#454545">(NOT</text>
<text transform="scale(0.947 1)" x="730.73" y="643.4" text-anchor="middle" font-size="8.1" fill="#454545">USED)</text>
<text transform="scale(0.947 1)" x="820.38" y="614.6" text-anchor="end" font-size="8.1" fill="#454545">A2</text>
<text transform="scale(0.947 1)" x="820.49" y="627.2" text-anchor="end" font-size="8.1" fill="#454545">WHT</text>
<text transform="scale(0.947 1)" x="839.49" y="614.6" font-size="8.1" fill="#454545">T5</text>
<text transform="scale(0.947 1)" x="858.39" y="622.6" text-anchor="middle" font-size="8.1" fill="#454545">(OPTION</text>
<text transform="scale(0.947 1)" x="858.39" y="631.8" text-anchor="middle" font-size="8.1" fill="#454545">CONNECTOR)</text>
<text transform="scale(0.947 1)" x="891.66" y="614.6" font-size="8.1" fill="#454545">G6</text>
<text transform="scale(0.947 1)" x="908.98" y="622.6" text-anchor="middle" font-size="8.1" fill="#454545">(NOT</text>
<text transform="scale(0.947 1)" x="908.98" y="631.8" text-anchor="middle" font-size="8.1" fill="#454545">USED)</text>
<path d="M103.4,608 L103.4,648" stroke="#dadada" stroke-width="1.9" fill="none" />
<text transform="scale(0.947 1)" x="105.07" y="627.1" text-anchor="end" font-size="8.1" fill="#454545">WHT</text>
<text transform="scale(0.947 1)" x="101.9" y="645.6" text-anchor="middle" font-size="8.1" fill="#454545">1</text>
<path d="M99.10000000000001,649.7 C100.00000000000001,646.7 106.8,646.7 107.7,649.7" stroke="#3a3a3a" stroke-width="1.0" fill="none" />
<rect x="93.6" y="652.1" width="19.9" height="41.2" fill="#dadaff" stroke="#2a2a2a" stroke-width="1.4"/>
<path d="M99.10000000000001,695.7 C100.00000000000001,698.7 106.8,698.7 107.7,695.7" stroke="#3a3a3a" stroke-width="1.0" fill="none" />
<text transform="scale(0.947 1)" x="122.49" y="657.6" font-size="8.1" fill="#454545">CARGO</text>
<text transform="scale(0.947 1)" x="122.49" y="667.05" font-size="8.1" fill="#454545">AREA</text>
<text transform="scale(0.947 1)" x="122.49" y="676.5" font-size="8.1" fill="#454545">ACCESSORY</text>
<text transform="scale(0.947 1)" x="122.49" y="685.95" font-size="8.1" fill="#454545">POWER</text>
<text transform="scale(0.947 1)" x="122.49" y="695.4" font-size="8.1" fill="#454545">SOCKET</text>
<path d="M103.4,699 L103.4,744" stroke="#555" stroke-width="1.6" fill="none" />
<text transform="scale(0.947 1)" x="101.37" y="717.5" text-anchor="middle" font-size="8.1" fill="#454545">2</text>
<text transform="scale(0.947 1)" x="105.07" y="733" text-anchor="end" font-size="8.1" fill="#454545">BLK</text>
<circle cx="103.4" cy="748.3" r="1.7" fill="#111"/>
<path d="M98.3,751.6 L109,751.6" stroke="#888" stroke-width="1.2" fill="none" />
<path d="M101.8,755.8 L105.3,755.8" stroke="#777" stroke-width="1.1" fill="none" />
<text transform="scale(0.947 1)" x="109.29" y="767.6" text-anchor="middle" font-size="8.1" fill="#454545">G604</text>
<path d="M180.5,608 L180.5,698" stroke="#ff8aaa" stroke-width="1.7" fill="none" />
<path d="M218.9,608 L218.9,698" stroke="#8a6812" stroke-width="1.8" fill="none" />
<text transform="scale(0.947 1)" x="186.8" y="627.1" text-anchor="end" font-size="8.1" fill="#454545">PNK</text>
<text transform="scale(0.947 1)" x="227.24" y="627.1" text-anchor="end" font-size="8.1" fill="#454545">BRN</text>
<text transform="scale(0.947 1)" x="186.8" y="696.5" text-anchor="end" font-size="8.1" fill="#454545">B12</text>
<text transform="scale(0.947 1)" x="227.24" y="696.5" text-anchor="end" font-size="8.1" fill="#454545">A2</text>
<path d="M176.2,701.0 C177.1,698.0 183.9,698.0 184.8,701.0" stroke="#3a3a3a" stroke-width="1.0" fill="none" />
<path d="M214.6,701.0 C215.5,698.0 222.3,698.0 223.20000000000002,701.0" stroke="#3a3a3a" stroke-width="1.0" fill="none" />
<rect x="165.5" y="703.4" width="67.69999999999999" height="40.5" fill="#dadaff"/>
<path d="M165.5,703.4 H233.2" stroke="#2a2a2a" stroke-width="1.35" stroke-dasharray="7 4.7" fill="none" stroke-dashoffset="1.6"/>
<path d="M165.5,743.9 H233.2" stroke="#2a2a2a" stroke-width="1.35" stroke-dasharray="7 4.7" fill="none" stroke-dashoffset="1.6"/>
<path d="M165.5,703.4 V743.9 M233.2,703.4 V743.9" stroke="#2a2a2a" stroke-width="1.35" stroke-dasharray="7 4.7" fill="none" stroke-dashoffset="1.6"/>
<text transform="scale(0.947 1)" x="216.26" y="755.9" text-anchor="middle" font-size="8.1" fill="#454545">POWER TAILGATE</text>
<text transform="scale(0.947 1)" x="216.26" y="765.8" text-anchor="middle" font-size="8.1" fill="#454545">CONTROL UNIT</text>
<path d="M320.9,608 L320.9,700" stroke="#dadada" stroke-width="1.9" fill="none" />
<path d="M269.4,700 L269.4,647 L397.4,647 L397.4,700" stroke="#dadada" stroke-width="1.9" fill="none" />
<circle cx="320.9" cy="647" r="1.9" fill="#111"/>
<text transform="scale(0.947 1)" x="334.11" y="627.1" text-anchor="end" font-size="8.1" fill="#454545">WHT</text>
<path d="M265.09999999999997,701.0 C265.99999999999994,698.0 272.8,698.0 273.7,701.0" stroke="#3a3a3a" stroke-width="1.0" fill="none" />
<text transform="scale(0.947 1)" x="280.36" y="696.5" text-anchor="middle" font-size="8.1" fill="#454545">1</text>
<path d="M316.59999999999997,701.0 C317.49999999999994,698.0 324.3,698.0 325.2,701.0" stroke="#3a3a3a" stroke-width="1.0" fill="none" />
<text transform="scale(0.947 1)" x="334.11" y="696.5" text-anchor="middle" font-size="8.1" fill="#454545">1</text>
<path d="M393.09999999999997,701.0 C393.99999999999994,698.0 400.8,698.0 401.7,701.0" stroke="#3a3a3a" stroke-width="1.0" fill="none" />
<text transform="scale(0.947 1)" x="413.94" y="696.5" text-anchor="middle" font-size="8.1" fill="#454545">3</text>
<text transform="scale(0.947 1)" x="280.36" y="677.3" text-anchor="end" font-size="8.1" fill="#454545">WHT</text>
<text transform="scale(0.947 1)" x="334.11" y="677.3" text-anchor="end" font-size="8.1" fill="#454545">WHT</text>
<text transform="scale(0.947 1)" x="415.52" y="677.3" text-anchor="end" font-size="8.1" fill="#454545">WHT</text>
<rect x="255.6" y="703.4" width="28.799999999999983" height="40.5" fill="#dadaff"/>
<path d="M255.6,703.4 H284.4" stroke="#2a2a2a" stroke-width="1.35" stroke-dasharray="7 4.7" fill="none" stroke-dashoffset="1.6"/>
<path d="M255.6,743.9 H284.4" stroke="#2a2a2a" stroke-width="1.35" stroke-dasharray="7 4.7" fill="none" stroke-dashoffset="1.6"/>
<path d="M255.6,703.4 V743.9 M284.4,703.4 V743.9" stroke="#2a2a2a" stroke-width="1.35" stroke-dasharray="7 4.7" fill="none" stroke-dashoffset="1.6"/>
<rect x="306.5" y="703.4" width="28.80000000000001" height="40.5" fill="#dadaff"/>
<path d="M306.5,703.4 H335.3" stroke="#2a2a2a" stroke-width="1.35" stroke-dasharray="7 4.7" fill="none" stroke-dashoffset="1.6"/>
<path d="M306.5,743.9 H335.3" stroke="#2a2a2a" stroke-width="1.35" stroke-dasharray="7 4.7" fill="none" stroke-dashoffset="1.6"/>
<path d="M306.5,703.4 V743.9 M335.3,703.4 V743.9" stroke="#2a2a2a" stroke-width="1.35" stroke-dasharray="7 4.7" fill="none" stroke-dashoffset="1.6"/>
<rect x="383.3" y="703.4" width="29.099999999999966" height="40.5" fill="#dadaff"/>
<path d="M383.3,703.4 H412.4" stroke="#2a2a2a" stroke-width="1.35" stroke-dasharray="7 4.7" fill="none" stroke-dashoffset="1.6"/>
<path d="M383.3,743.9 H412.4" stroke="#2a2a2a" stroke-width="1.35" stroke-dasharray="7 4.7" fill="none" stroke-dashoffset="1.6"/>
<path d="M383.3,703.4 V743.9 M412.4,703.4 V743.9" stroke="#2a2a2a" stroke-width="1.35" stroke-dasharray="7 4.7" fill="none" stroke-dashoffset="1.6"/>
<text transform="scale(0.947 1)" x="284.05" y="755.9" text-anchor="middle" font-size="8.1" fill="#454545">LEFT</text>
<text transform="scale(0.947 1)" x="284.05" y="765.7" text-anchor="middle" font-size="8.1" fill="#454545">TAILGATE</text>
<text transform="scale(0.947 1)" x="284.05" y="775.5" text-anchor="middle" font-size="8.1" fill="#454545">LIGHT</text>
<text transform="scale(0.947 1)" x="337.91" y="755.9" text-anchor="middle" font-size="8.1" fill="#454545">RIGHT</text>
<text transform="scale(0.947 1)" x="337.91" y="765.7" text-anchor="middle" font-size="8.1" fill="#454545">TAILGATE</text>
<text transform="scale(0.947 1)" x="337.91" y="775.5" text-anchor="middle" font-size="8.1" fill="#454545">LIGHT</text>
<text transform="scale(0.947 1)" x="418.69" y="755.9" text-anchor="middle" font-size="8.1" fill="#454545">POWER TAILGATE</text>
<text transform="scale(0.947 1)" x="418.69" y="765.7" text-anchor="middle" font-size="8.1" fill="#454545">INSIDE SWITCH</text>
<path d="M551,608 L551,698.5" stroke="#2fa812" stroke-width="2" fill="none" />
<path d="M546.2,701.0 C547.1,698.0 553.9,698.0 554.8,701.0" stroke="#3a3a3a" stroke-width="1.0" fill="none" />
<text transform="scale(0.947 1)" x="577.61" y="696.5" text-anchor="end" font-size="8.1" fill="#454545">B8</text>
<rect x="536.5" y="703.4" width="29.100000000000023" height="40.5" fill="#dadaff"/>
<path d="M536.5,703.4 H565.6" stroke="#2a2a2a" stroke-width="1.35" stroke-dasharray="7 4.7" fill="none" stroke-dashoffset="1.6"/>
<path d="M536.5,743.9 H565.6" stroke="#2a2a2a" stroke-width="1.35" stroke-dasharray="7 4.7" fill="none" stroke-dashoffset="1.6"/>
<path d="M536.5,703.4 V743.9 M565.6,703.4 V743.9" stroke="#2a2a2a" stroke-width="1.35" stroke-dasharray="7 4.7" fill="none" stroke-dashoffset="1.6"/>
<text transform="scale(0.947 1)" x="580.78" y="755.9" text-anchor="middle" font-size="8.1" fill="#454545">FRONT</text>
<text transform="scale(0.947 1)" x="580.78" y="765.7" text-anchor="middle" font-size="8.1" fill="#454545">PASSENGER'S</text>
<text transform="scale(0.947 1)" x="580.78" y="775.5" text-anchor="middle" font-size="8.1" fill="#454545">MPCS UNIT</text>
<path d="M653.3,608 L653.3,698" stroke="#dadada" stroke-width="1.9" fill="none" />
<path d="M649.0,701.0 C649.9,698.0 656.6999999999999,698.0 657.5999999999999,701.0" stroke="#3a3a3a" stroke-width="1.0" fill="none" />
<text transform="scale(0.947 1)" x="685.74" y="696.5" text-anchor="end" font-size="8.1" fill="#454545">B8</text>
<rect x="638.4" y="703.4" width="29.0" height="40.5" fill="#dadaff"/>
<path d="M638.4,703.4 H667.4" stroke="#2a2a2a" stroke-width="1.35" stroke-dasharray="7 4.7" fill="none" stroke-dashoffset="1.6"/>
<path d="M638.4,743.9 H667.4" stroke="#2a2a2a" stroke-width="1.35" stroke-dasharray="7 4.7" fill="none" stroke-dashoffset="1.6"/>
<path d="M638.4,703.4 V743.9 M667.4,703.4 V743.9" stroke="#2a2a2a" stroke-width="1.35" stroke-dasharray="7 4.7" fill="none" stroke-dashoffset="1.6"/>
<text transform="scale(0.947 1)" x="689.23" y="755.9" text-anchor="middle" font-size="8.1" fill="#454545">DRIVER'S</text>
<text transform="scale(0.947 1)" x="689.23" y="765.7" text-anchor="middle" font-size="8.1" fill="#454545">MPCS UNIT</text>
<path d="M729.5,608 L729.5,698" stroke="#dadada" stroke-width="1.9" fill="none" />
<path d="M725.2,701.0 C726.1,698.0 732.9,698.0 733.8,701.0" stroke="#3a3a3a" stroke-width="1.0" fill="none" />
<text transform="scale(0.947 1)" x="767.16" y="696.5" text-anchor="end" font-size="8.1" fill="#454545">B3</text>
<rect x="715.5" y="703.4" width="29.0" height="40.5" fill="#dadaff"/>
<path d="M715.5,703.4 H744.5" stroke="#2a2a2a" stroke-width="1.35" stroke-dasharray="7 4.7" fill="none" stroke-dashoffset="1.6"/>
<path d="M715.5,743.9 H744.5" stroke="#2a2a2a" stroke-width="1.35" stroke-dasharray="7 4.7" fill="none" stroke-dashoffset="1.6"/>
<path d="M715.5,703.4 V743.9 M744.5,703.4 V743.9" stroke="#2a2a2a" stroke-width="1.35" stroke-dasharray="7 4.7" fill="none" stroke-dashoffset="1.6"/>
<text transform="scale(0.947 1)" x="771.28" y="755.8" text-anchor="middle" font-size="8.1" fill="#454545">POWER TILT/</text>
<text transform="scale(0.947 1)" x="771.28" y="765.4" text-anchor="middle" font-size="8.1" fill="#454545">TELESCOPIC</text>
<text transform="scale(0.947 1)" x="771.28" y="774.8" text-anchor="middle" font-size="8.1" fill="#454545">STEERING</text>
<text transform="scale(0.947 1)" x="771.28" y="784.0" text-anchor="middle" font-size="8.1" fill="#454545">CONTROL UNIT</text>
<path d="M780.8,608 L780.8,672.8" stroke="#dadada" stroke-width="1.9" fill="none" />
<path d="M772.4,672.8 L789.5,672.8 L781,687.5 Z" stroke="#666" stroke-width="1.1" fill="#cfcffa" />
<text x="781" y="680.5" text-anchor="middle" font-size="7.5" fill="#555">F</text>
<text transform="scale(0.947 1)" x="822.91" y="696" text-anchor="middle" font-size="8.1" fill="#454545">TO IGNITION</text>
<text transform="scale(0.947 1)" x="822.91" y="705.6" text-anchor="middle" font-size="8.1" fill="#454545">SWITCH</text>
<text transform="scale(0.947 1)" x="822.91" y="715" text-anchor="middle" font-size="8.1" fill="#454545">(DIAGRAM</text>
<text transform="scale(0.947 1)" x="822.91" y="724.6" text-anchor="middle" font-size="8.1" fill="#454545">4 OF 6)</text>
<rect x="0" y="852" width="964" height="5" fill="#fff"/>
</svg></body></html>
